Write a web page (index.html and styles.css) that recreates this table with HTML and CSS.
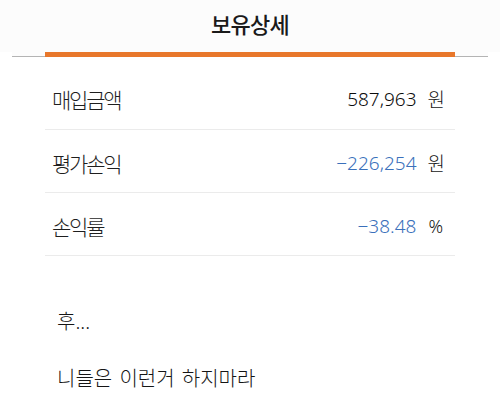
FILE: index.html
```html
<!DOCTYPE html>
<html lang="ko">
<head>
<meta charset="utf-8">
<link rel="stylesheet" href="styles.css">
</head>
<body>
<div class="page">
  <header class="head">
    <h1 class="title">보유상세</h1>
  </header>
  <div class="tabline"><div class="tabbar"></div></div>
  <ul class="list">
    <li class="row"><span class="label">매입금액</span><span class="val"><span class="num">587,963</span><span class="unit">원</span></span></li>
    <li class="row"><span class="label">평가손익</span><span class="val"><span class="num neg">−226,254</span><span class="unit">원</span></span></li>
    <li class="row"><span class="label">손익률</span><span class="val"><span class="num neg">−38.48</span><span class="unit pct">%</span></span></li>
  </ul>
  <p class="text t1">후...</p>
  <p class="text t2">니들은 이런거 하지마라</p>
</div>
</body>
</html>
```
FILE: styles.css
```css
* { box-sizing: border-box; }
html, body { margin: 0; padding: 0; background: #fff; }
body {
  font-family: "Noto Sans", "Noto Sans CJK KR", sans-serif;
  color: #222;
}
.page { width: 500px; height: 409px; overflow: hidden; }
.head {
  background: #fcfcfc;
  height: 52px;
  display: flex;
  justify-content: center;
  align-items: flex-start;
}
.title {
  margin: 0;
  padding-top: 9px;
  font-size: 22px;
  line-height: 30px;
  font-weight: 500;
  letter-spacing: -0.8px;
  color: #1a1a1a;
}
.tabline {
  margin: 0 12px;
  height: 5px;
  border-bottom: 1px solid #b4b4b4;
  background: #fcfcfc;
  display: flex;
  justify-content: center;
}
.tabbar {
  width: 410px;
  height: 5px;
  background: #e8772b;
  margin-bottom: -1px;
}
.list {
  list-style: none;
  margin: 10px 45px 0;
  padding: 0;
}
.row {
  height: 63px;
  display: flex;
  align-items: center;
  justify-content: space-between;
  padding: 4px 10px 0 7px;
  border-bottom: 1px solid #ebebeb;
}
.row:first-child { padding-top: 2px; }
.label {
  font-size: 21px;
  font-weight: 300;
  letter-spacing: -2.2px;
  color: #1e1e1e;
}
.val { display: flex; align-items: center; }
.num {
  font-size: 19px;
  font-weight: 300;
  color: #0c0c0c;
}
.num.neg { color: #3a70bb; }
.unit {
  margin-left: 11px;
  font-size: 19px;
  font-weight: 300;
  color: #151515;
}
.unit.pct { font-size: 18px; margin-left: 12px; margin-right: 2px; }
.text {
  margin: 0;
  padding-left: 57px;
  font-size: 20px;
  font-weight: 300;
  line-height: 28px;
  word-spacing: 2px;
  color: #151515;
}
.t1 { margin-top: 52px; }
.t2 { margin-top: 29px; }
```
